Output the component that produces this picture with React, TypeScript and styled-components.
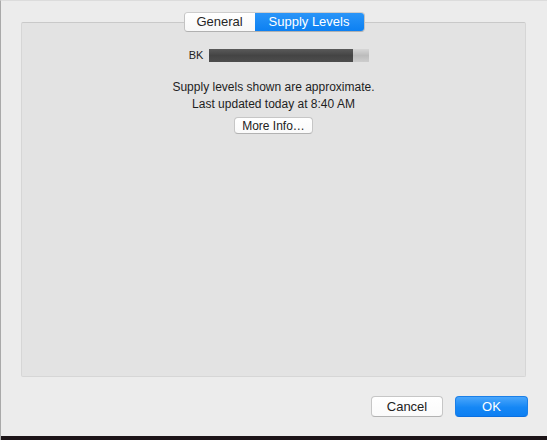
import React from "react";
import styled, { createGlobalStyle } from "styled-components";

const Global = createGlobalStyle`
  html, body { margin: 0; padding: 0; background: #ececec; }
  body { font-family: "Liberation Sans", Arial, sans-serif; }
  * { box-sizing: border-box; }
`;

const Window = styled.div`
  width: 547px;
  height: 440px;
  background: #ececec;
  border-left: 1px solid #a9a9a9;
  border-top: 1px solid #dcdcdc;
  display: flex;
  flex-direction: column;
  overflow: hidden;
`;

const Body = styled.div`
  display: flex;
  flex-direction: column;
  align-items: center;
  padding: 11px 21px 0 20px;
`;

const Segmented = styled.div`
  position: relative;
  z-index: 1;
  display: flex;
  height: 20px;
  border-radius: 4px;
  border: 1px solid #c3c3c3;
  border-top-color: #cdcdcd;
  border-bottom-color: #b0b0b0;
  overflow: hidden;
  margin-left: 1px;
`;

const Segment = styled.div<{ $active?: boolean }>`
  display: flex;
  align-items: center;
  justify-content: center;
  font-size: 13px;
  line-height: 18px;
  color: ${(p) => (p.$active ? "#ffffff" : "#262626")};
  background: ${(p) =>
    p.$active ? "linear-gradient(#2a95f8, #0c80f2)" : "linear-gradient(#ffffff, #f8f8f8)"};
  width: ${(p) => (p.$active ? "109px" : "70px")};
`;

const Panel = styled.div`
  align-self: stretch;
  margin-top: -10px;
  height: 355px;
  background: #e3e3e3;
  border: 1px solid #d6d6d6;
  border-top-color: #c9c9c9;
  border-radius: 2px;
  display: flex;
  flex-direction: column;
  align-items: center;
  padding-top: 26px;
`;

const LevelRow = styled.div`
  display: flex;
  align-items: center;
  gap: 6px;
  margin-left: 11px;
`;

const InkLabel = styled.span`
  font-size: 11px;
  color: #222;
  line-height: 13px;
`;

const Bar = styled.div`
  display: flex;
  width: 160px;
  height: 13px;
`;

const BarFill = styled.div`
  background: linear-gradient(#5a5a5a, #444444 50%, #4d4d4d);
`;

const BarRest = styled.div`
  flex: 1;
  background: linear-gradient(#d6d6d6, #bcbcbc 50%, #cdcdcd);
`;

const Note = styled.div`
  margin-top: 17px;
  text-align: center;
  font-size: 12px;
  line-height: 16.5px;
  color: #1e1e1e;
`;

const Button = styled.button<{ $primary?: boolean; $w: number }>`
  font-family: "Liberation Sans", Arial, sans-serif;
  font-size: 13px;
  width: ${(p) => p.$w}px;
  height: 21px;
  padding: 0;
  border-radius: 4px;
  border: 1px solid ${(p) => (p.$primary ? "#1a7fe8" : "#c6c6c6")};
  border-bottom-color: ${(p) => (p.$primary ? "#0a6fe0" : "#b2b2b2")};
  color: ${(p) => (p.$primary ? "#ffffff" : "#222222")};
  background: ${(p) =>
    p.$primary ? "linear-gradient(#4aa6fb, #1587f5 55%, #0d7ff2)" : "linear-gradient(#ffffff, #fafafa)"};
  display: flex;
  align-items: center;
  justify-content: center;
`;

const SmallButton = styled(Button)`
  font-size: 12px;
  height: 17px;
  margin-top: 5px;
`;

const Footer = styled.div`
  display: flex;
  justify-content: flex-end;
  gap: 12px;
  padding: 19px 19px 0 0;
`;

const Spacer = styled.div`
  flex: 1;
`;

const BottomEdge = styled.div`
  height: 4px;
  background: #1c1417;
`;

export default function App() {
  return (
    <>
      <Global />
      <Window>
        <Body>
          <Segmented>
            <Segment>General</Segment>
            <Segment $active>Supply Levels</Segment>
          </Segmented>
          <Panel>
            <LevelRow>
              <InkLabel>BK</InkLabel>
              <Bar>
                <BarFill style={{ width: `${(144 / 160) * 100}%` }} />
                <BarRest />
              </Bar>
            </LevelRow>
            <Note>
              Supply levels shown are approximate.
              <br />
              Last updated today at 8:40 AM
            </Note>
            <SmallButton $w={79}>More Info…</SmallButton>
          </Panel>
        </Body>
        <Footer>
          <Button $w={72}>Cancel</Button>
          <Button $primary $w={73}>OK</Button>
        </Footer>
        <Spacer />
        <BottomEdge />
      </Window>
    </>
  );
}
